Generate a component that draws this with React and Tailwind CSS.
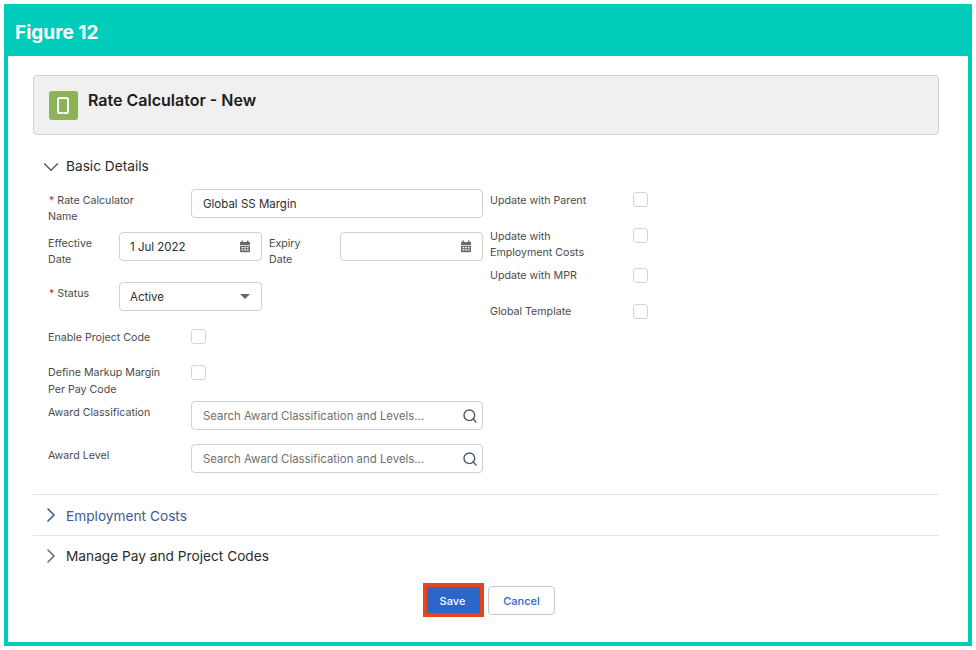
import { ChevronDown, ChevronRight, Search } from 'lucide-react'

function CalendarIcon() {
  return (
    <svg width="12" height="13" viewBox="0 0 12 13" fill="#6b6b6b">
      <rect x="2.5" y="0.5" width="1.5" height="2.5" />
      <rect x="8" y="0.5" width="1.5" height="2.5" />
      <path d="M1 2h10v3H1z" />
      <path fillRule="evenodd" d="M1 5.8h10v5.4a1 1 0 0 1-1 1H2a1 1 0 0 1-1-1zM2.6 7v1.2h1.7V7zm2.6 0v1.2h1.7V7zm2.6 0v1.2h1.7V7zM2.6 9.2v1.2h1.7V9.2zm2.6 0v1.2h1.7V9.2zm2.6 0v1.2h1.7V9.2z" />
    </svg>
  )
}

function TabletIcon() {
  return (
    <svg width="12" height="17" viewBox="0 0 12 17" fill="none" className="mr-[1px]">
      <rect x="1" y="1" width="10" height="15" rx="1.8" stroke="white" strokeWidth="2" />
      <circle cx="6" cy="15.9" r="0.6" fill="#8db357" />
    </svg>
  )
}

function Check() {
  return <div className="w-[15px] h-[15px] rounded-[3px] border border-[#d4d4d4] bg-white shrink-0"></div>
}

function Required() {
  return <span className="text-[#d9241c] mr-[3px] ml-[1px]">*</span>
}

function Field({ className, children, icon }) {
  return (
    <div className={`h-[29px] border border-[#d0d0d0] rounded-[4px] bg-white flex items-center justify-between pr-[10px] text-[#2e2e2e] ${className}`}>
      <span>{children}</span>
      {icon}
    </div>
  )
}

function SearchField() {
  return (
    <Field className="w-[292px] pl-[11px] text-[11.4px] !text-[#6f6f6f] !pr-[4px]" icon={<Search size={16} color="#4f5a65" strokeWidth={2.1} />}>
      Search Award Classification and Levels...
    </Field>
  )
}

function App() {
  return (
    <div className="font-['Inter',sans-serif] bg-white w-[976px] h-[650px] p-[4px] pr-[4px]">
      <div className="h-[642px] border-[4px] border-[#00cdb9] flex flex-col">
        <div className="h-[48px] bg-[#00cdb9] shrink-0 flex items-center pl-[7px] pt-[3px]">
          <span className="font-bold text-[19px] text-white">Figure 12</span>
        </div>

        <div className="pl-[25px] pr-[29px] pt-[19px] flex-1">
          <div className="h-[60px] bg-[#f0f0f0] border border-[#d2d2d2] rounded-[4px] flex items-start pl-[15px] pt-[15px] gap-[10px]">
            <div className="w-[29px] h-[29px] rounded-[3px] bg-[#8db357] flex items-center justify-center">
              <TabletIcon />
            </div>
            <h1 className="text-[16px] font-semibold text-[#1c1c1c] leading-[19px]">Rate Calculator - New</h1>
          </div>

          <div className="flex items-center h-[20px] mt-[21px] pl-[9px] gap-[6px] text-[13.7px] text-[#2b2b2b]">
            <ChevronDown size={26} color="#555" strokeWidth={1.2} className="-mx-1 mt-[1px]" />
            <span>Basic Details</span>
          </div>

          <div className="flex pl-[15px] mt-[13px] text-[10.65px] leading-[16px] text-[#4a4a4a]">
            <div className="w-[435px] flex flex-col">
              <div className="flex h-[43px]">
                <div className="w-[143px] pt-[4px]"><Required />Rate Calculator<br />Name</div>
                <Field className="w-[292px] pl-[11px] text-[11.5px]">Global SS Margin</Field>
              </div>
              <div className="flex h-[50px]">
                <div className="w-[71px] pt-[4px]">Effective<br />Date</div>
                <Field className="w-[143px] pl-[10px] text-[11.5px]" icon={<CalendarIcon />}>1 Jul 2022</Field>
                <div className="w-[78px] pl-[7px] pt-[4px]">Expiry<br />Date</div>
                <Field className="w-[143px] pl-[10px] text-[11.5px]" icon={<CalendarIcon />}></Field>
              </div>
              <div className="flex h-[47px]">
                <div className="w-[71px] pt-[4px]"><Required />Status</div>
                <Field className="w-[143px] pl-[10px] text-[11.5px]" icon={<svg width="10" height="5" viewBox="0 0 10 5" fill="#666" className="mr-[1px]"><path d="M0 0h10L5 5z" /></svg>}>Active</Field>
              </div>
              <div className="flex h-[36px] items-start">
                <div className="w-[143px] pt-[1px]">Enable Project Code</div>
                <Check />
              </div>
              <div className="flex h-[36px] items-start">
                <div className="w-[143px] -mt-[1px] leading-[17px]">Define Markup Margin<br />Per Pay Code</div>
                <Check />
              </div>
              <div className="flex h-[43px]">
                <div className="w-[143px] pt-[4px]">Award Classification</div>
                <SearchField />
              </div>
              <div className="flex">
                <div className="w-[143px] pt-[4px]">Award Level</div>
                <SearchField />
              </div>
            </div>

            <div className="ml-[7px] w-[158px] flex flex-col">
              <div className="flex justify-between h-[36px] pt-[3px]">
                <div className="pt-[0.5px]">Update with Parent</div>
                <Check />
              </div>
              <div className="flex justify-between h-[40px] mb-[3px]">
                <div className="pt-[3.5px]">Update with<br />Employment Costs</div>
                <div className="pt-[3px]"><Check /></div>
              </div>
              <div className="flex justify-between h-[36px]">
                <div>Update with MPR</div>
                <Check />
              </div>
              <div className="flex justify-between">
                <div>Global Template</div>
                <Check />
              </div>
            </div>
          </div>

          <div className="border-t border-[#e4e4e4] mt-[21px] h-[41px] flex items-center pl-[9px] gap-[6px] text-[13.7px] text-[#3d5a94]">
            <ChevronRight size={24} color="#3d5a94" strokeWidth={1.6} className="-mx-[3px]" />
            <span className="mt-[2px]">Employment Costs</span>
          </div>
          <div className="border-t border-[#e4e4e4] h-[41px] flex items-center pl-[9px] gap-[6px] text-[13.7px] text-[#2b2b2b]">
            <ChevronRight size={24} color="#666" strokeWidth={1.5} className="-mx-[3px]" />
            <span>Manage Pay and Project Codes</span>
          </div>

          <div className="flex justify-center items-center gap-[4px] mt-[7px] text-[11px] font-medium pl-[6px]">
            <button className="w-[61px] h-[34px] border-[4px] border-[#e8431f] bg-[#2a67c9] text-white pr-[2px] pt-[2px]">Save</button>
            <button className="w-[67px] h-[29px] border border-[#c9c9c9] rounded-[4px] bg-white text-[#2a67c9] pt-[2px]">Cancel</button>
          </div>
        </div>
      </div>
    </div>
  )
}

export default App
